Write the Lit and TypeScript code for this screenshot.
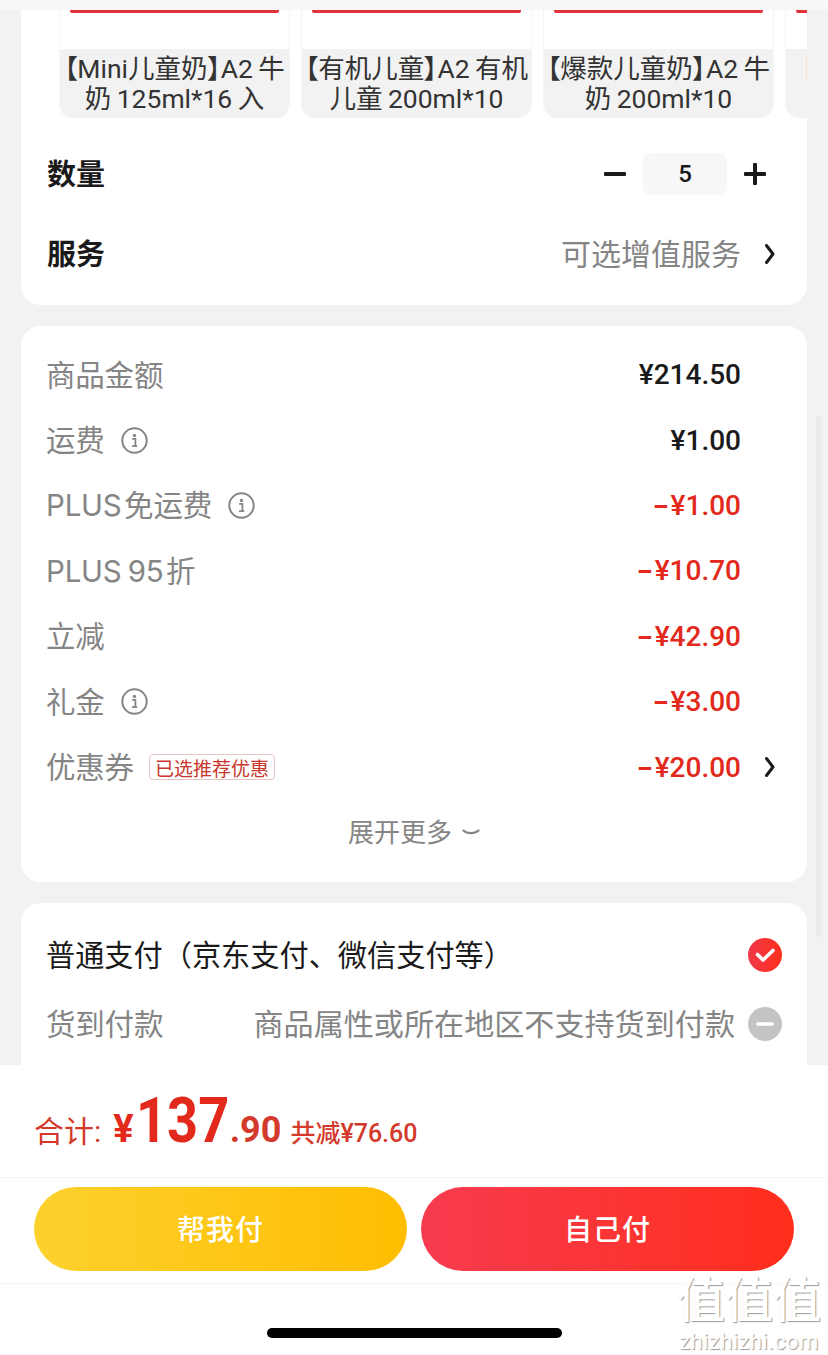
import { LitElement, css, html, svg } from 'lit'
import { customElement } from 'lit/decorators.js'

const products = [
  ['【Mini儿童奶】A2\u2009牛', '奶\u2009125ml*16\u2009入'],
  ['【有机儿童】A2\u2009有机', '儿童\u2009200ml*10'],
  ['【爆款儿童奶】A2\u2009牛', '奶\u2009200ml*10'],
  ['【孕妈奶粉】A2\u2009牛', '奶\u2009200ml*10'],
]

const prices = [
  { label: '商品金额', value: '¥214.50' },
  { label: '运费', value: '¥1.00', info: true },
  { label: 'PLUS\u200a免运费', value: '¥1.00', info: true, red: true },
  { label: 'PLUS 95\u200a折', value: '¥10.70', red: true },
  { label: '立减', value: '¥42.90', red: true },
  { label: '礼金', value: '¥3.00', info: true, red: true },
  { label: '优惠券', value: '¥20.00', red: true, tag: '已选推荐优惠', more: true },
]

const infoIcon = svg`<svg class="info" viewBox="0 0 27 27" fill="none">
  <circle cx="13.5" cy="13.5" r="12.2" stroke="#858585" stroke-width="2"/>
  <circle cx="13.5" cy="8.4" r="1.7" fill="#858585"/>
  <path d="M11.2 11.8h3.2v7.2M11 19.2h5.2" stroke="#858585" stroke-width="1.8"/>
</svg>`

const chevron = svg`<svg class="chevron" viewBox="0 0 12 22" fill="none">
  <path d="M2.5 2.5 9 11 2.5 19.5" stroke="#1a1a1a" stroke-width="3" stroke-linecap="round" stroke-linejoin="round"/>
</svg>`

@customElement('app-root')
export class AppRoot extends LitElement {
  static styles = css`
    :host {
      display: flex;
      flex-direction: column;
      position: relative;
      width: 828px;
      height: 1355px;
      overflow: hidden;
      background: #f2f2f2;
      color: #1a1a1a;
      font-family: Roboto, 'Noto Sans CJK SC', sans-serif;
    }
    .top-strip {
      height: 10px;
      flex: none;
      background: #f7f7f7;
    }
    .scroll {
      flex: 1;
      min-height: 0;
      overflow: hidden;
      padding: 0 21px;
      display: flex;
      flex-direction: column;
      gap: 21px;
    }
    .card {
      background: #fff;
      border-radius: 20px;
      flex: none;
      overflow: hidden;
    }
    .card.sku {
      border-radius: 0 0 20px 20px;
      height: 295px;
    }
    .rail {
      display: flex;
      gap: 11px;
      padding-left: 38px;
    }
    .thumb {
      flex: none;
      width: 231px;
      height: 108px;
      box-sizing: border-box;
      display: flex;
      flex-direction: column;
      border-radius: 0 0 14px 14px;
      overflow: hidden;
      border: 1px solid #f5f5f5;
      border-top: 0;
      border-bottom: 0;
    }
    .photo {
      flex: 1;
      padding: 0 10px;
    }
    .photo i {
      display: block;
      height: 3px;
      background: #e0323a;
      border-radius: 0 0 2px 2px;
    }
    .name {
      height: 69px;
      flex: none;
      margin: 0 -1px;
      background: #f2f2f2;
      color: #333;
      font-size: 26.5px;
      font-feature-settings: 'palt';
      line-height: 30px;
      text-align: center;
      white-space: nowrap;
      display: flex;
      flex-direction: column;
      justify-content: center;
      overflow: hidden;
    }
    .row {
      display: flex;
      align-items: center;
      padding: 0 26px;
    }
    .sku-title {
      font-size: 29px;
      font-weight: 700;
      flex: 1;
      margin-bottom: 4px;
    }
    .qty {
      height: 42px;
      margin-top: 35px;
      padding-right: 41px;
    }
    .service {
      height: 42px;
      margin-top: 38px;
      padding-right: 31px;
    }
    .step {
      width: 22px;
      height: 22px;
      position: relative;
    }
    .step::before,
    .step.plus::after {
      content: '';
      position: absolute;
      background: #1a1a1a;
      border-radius: 1px;
      left: 0;
      right: 0;
      top: 9px;
      height: 4px;
    }
    .step.plus::after {
      left: 9px;
      right: 9px;
      top: 0;
      height: 22px;
      width: 4px;
    }
    .count {
      width: 84px;
      height: 42px;
      margin: 0 17px;
      background: #f7f7f7;
      border-radius: 8px;
      display: flex;
      align-items: center;
      justify-content: center;
      font-size: 24px;
      font-weight: 500;
    }
    .hint {
      color: #858585;
      font-size: 30px;
      margin-bottom: 4px;
    }
    .chevron {
      width: 12px;
      height: 22px;
      flex: none;
      margin-left: 23px;
    }
    .card.price {
      height: 556px;
      padding-top: 16px;
      box-sizing: border-box;
    }
    .price-row {
      height: 65.4px;
      padding-right: 31px;
    }
    .label {
      color: #858585;
      font-family: Inter, 'Noto Sans CJK SC', sans-serif;
      font-size: 29.5px;
      letter-spacing: -0.2px;
      word-spacing: -2px;
      white-space: nowrap;
      margin: 0 0 4px -1px;
    }
    .info {
      width: 27px;
      height: 27px;
      flex: none;
      margin-left: 16px;
    }
    .tag {
      margin-left: 15px;
      height: 26px;
      box-sizing: border-box;
      padding: 0 5px;
      display: flex;
      align-items: center;
      border: 1px solid #e6c4c0;
      border-radius: 4px;
      color: #c8362c;
      font-size: 19px;
      white-space: nowrap;
    }
    .value {
      margin-left: auto;
      margin-right: 35px;
      font-size: 28px;
      font-weight: 500;
      white-space: nowrap;
    }
    .value.red::before {
      content: '-';
      display: inline-block;
      margin-right: 1px;
      font-weight: 700;
      transform: scaleX(1.6);
      transform-origin: right;
    }
    .with-more .value {
      margin-right: 0;
    }
    .red {
      color: #e2291c;
    }
    .expand {
      height: 65px;
      box-sizing: border-box;
      padding-bottom: 4px;
      display: flex;
      align-items: center;
      justify-content: center;
      gap: 10px;
      color: #858585;
      font-size: 26px;
    }
    .expand svg {
      width: 18px;
      height: 9px;
      margin-top: 4px;
    }
    .card.pay {
      height: 200px;
      padding-top: 17px;
      box-sizing: border-box;
    }
    .pay-row {
      height: 69px;
      padding-right: 25px;
      justify-content: space-between;
    }
    .pay-title {
      font-size: 29.2px;
      color: #1a1a1a;
      white-space: nowrap;
      margin: 0 0 4px -1px;
    }
    .pay-note {
      color: #858585;
      font-size: 30.1px;
      margin-left: auto;
      margin-right: 13px;
      white-space: nowrap;
      margin-bottom: 4px;
    }
    .mark {
      width: 34px;
      height: 34px;
      flex: none;
    }
    .sheet {
      flex: none;
      height: 290px;
      background: #fff;
      display: flex;
      flex-direction: column;
    }
    .total {
      height: 113px;
      flex: none;
      box-sizing: border-box;
      padding: 26px 34px 0;
      display: flex;
      align-items: baseline;
      color: #d33a2c;
      white-space: nowrap;
      border-bottom: 1px solid #f5f5f5;
    }
    .total .sum {
      font-size: 30px;
    }
    .total .yen {
      font-size: 38px;
      font-weight: 700;
      color: #e2291c;
      margin-left: 12px;
    }
    .total .big {
      display: inline-block;
      width: 94px;
      font-size: 63px;
      line-height: 60px;
      font-weight: 700;
      color: #e2291c;
      margin-left: 2px;
      transform: scaleX(0.86);
      transform-origin: left;
    }
    .total .cents {
      font-size: 36px;
      font-weight: 700;
      color: #d33a2c;
    }
    .total .saved {
      font-size: 25px;
      font-weight: 500;
      margin-left: 9px;
    }
    .actions {
      height: 106px;
      flex: none;
      box-sizing: border-box;
      padding: 9px 34px 12px;
      display: flex;
      gap: 14px;
      border-bottom: 1px solid #f5f5f5;
    }
    .btn {
      flex: 1;
      height: 84px;
      border: 0;
      padding: 0 0 3px;
      border-radius: 42px;
      color: #fff;
      font: 500 28px Roboto, 'Noto Sans CJK SC', sans-serif;
      letter-spacing: 1px;
    }
    .btn.friend {
      background: linear-gradient(90deg, #fdd12e, #ffbd00);
    }
    .btn.self {
      background: linear-gradient(90deg, #f73b4f, #ff2e1c);
    }
    .home {
      flex: 1;
      display: flex;
      justify-content: center;
      padding-top: 44px;
    }
    .home i {
      width: 295px;
      height: 10px;
      border-radius: 5px;
      background: #000;
    }
    .scrollbar {
      position: absolute;
      left: 816px;
      top: 415px;
      width: 5px;
      height: 522px;
      border-radius: 3px;
      background: #eaeaea;
    }
    .watermark {
      position: absolute;
      left: 676px;
      top: 1272px;
      width: 146px;
      text-align: center;
      color: #fff;
      text-shadow: 1px 1px 1px #9a9a9a;
      white-space: nowrap;
    }
    .watermark b {
      display: block;
      font-size: 48px;
      line-height: 58px;
      font-weight: 500;
    }
    .watermark span {
      display: block;
      font-size: 22px;
      line-height: 24px;
      letter-spacing: 0.4px;
    }
  `

  render() {
    return html`
      <div class="top-strip"></div>
      <div class="scroll">
        <section class="card sku">
          <div class="rail">
            ${products.map(
              ([a, b]) => html`
                <div class="thumb">
                  <div class="photo"><i></i></div>
                  <div class="name"><span>${a}</span><span>${b}</span></div>
                </div>
              `
            )}
          </div>
          <div class="row qty">
            <span class="sku-title">数量</span>
            <span class="step"></span>
            <span class="count">5</span>
            <span class="step plus"></span>
          </div>
          <div class="row service">
            <span class="sku-title">服务</span>
            <span class="hint">可选增值服务</span>
            ${chevron}
          </div>
        </section>

        <section class="card price">
          ${prices.map(
            (p) => html`
              <div class="row price-row ${p.more ? 'with-more' : ''}">
                <span class="label">${p.label}</span>
                ${p.info ? infoIcon : ''}
                ${p.tag ? html`<span class="tag">${p.tag}</span>` : ''}
                <span class="value ${p.red ? 'red' : ''}">${p.value}</span>
                ${p.more ? chevron : ''}
              </div>
            `
          )}
          <div class="expand">
            <span>展开更多</span>
            <svg viewBox="0 0 18 9" fill="none">
              <path d="M1.5 2.5C5 6 13 6 16.5 2.5" stroke="#858585" stroke-width="2.2" stroke-linecap="round"/>
            </svg>
          </div>
        </section>

        <section class="card pay">
          <div class="row pay-row">
            <span class="pay-title">普通支付（京东支付、微信支付等）</span>
            <svg class="mark" viewBox="0 0 34 34">
              <defs>
                <linearGradient id="chk" x1="0" x2="1">
                  <stop offset="0" stop-color="#f0394a"/>
                  <stop offset="1" stop-color="#ff2e1c"/>
                </linearGradient>
              </defs>
              <circle cx="17" cy="17" r="17" fill="url(#chk)"/>
              <path d="M9.5 16.5 15 22 25 12.5" fill="none" stroke="#fff" stroke-width="3.6" stroke-linecap="round" stroke-linejoin="round"/>
            </svg>
          </div>
          <div class="row pay-row">
            <span class="label">货到付款</span>
            <span class="pay-note">商品属性或所在地区不支持货到付款</span>
            <svg class="mark" viewBox="0 0 34 34">
              <circle cx="17" cy="17" r="17" fill="#c4c4c4"/>
              <path d="M10 17h14" stroke="#fff" stroke-width="3.6" stroke-linecap="round"/>
            </svg>
          </div>
        </section>
      </div>

      <footer class="sheet">
        <div class="total">
          <span class="sum">合计:</span>
          <span class="yen">¥</span>
          <span class="big">137</span>
          <span class="cents">.90</span>
          <span class="saved">共减¥76.60</span>
        </div>
        <div class="actions">
          <button class="btn friend">帮我付</button>
          <button class="btn self">自己付</button>
        </div>
        <div class="home"><i></i></div>
      </footer>

      <div class="scrollbar"></div>
      <div class="watermark"><b>值值值</b><span>zhizhizhi.com</span></div>
    `
  }
}
